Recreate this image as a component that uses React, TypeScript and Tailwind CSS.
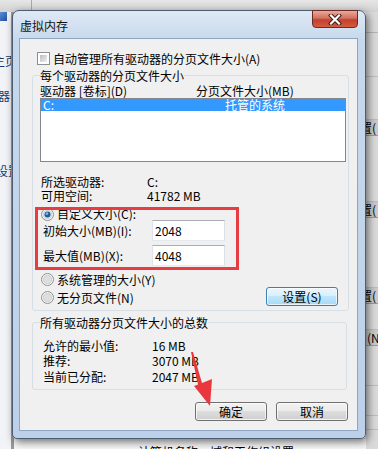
import type { ReactNode } from 'react';

function CheckBox() {
    return (
        <span className="block w-[13px] h-[13px] shrink-0 border border-[#8e8f8f] bg-white p-[2px]">
            <span className="block w-full h-full bg-[linear-gradient(135deg,#b9bdc3,#eeeeef)]" />
        </span>
    );
}

function Radio({ checked = false }: { checked?: boolean }) {
    return (
        <svg width="13" height="13" viewBox="0 0 13 13" className="shrink-0">
            <circle cx="6.5" cy="6.5" r="6" fill="#f6f6f6" stroke="#8e8f8f" />
            <circle cx="6.5" cy="6.5" r="4.2" fill={checked ? '#dfe7f0' : '#dedede'} stroke="#c9c9c9" strokeWidth="0.8" />
            {checked && (
                <>
                    <circle cx="6.5" cy="6.5" r="3" fill="#1d5d98" />
                    <circle cx="5.9" cy="5.7" r="1.4" fill="#78b4e4" />
                </>
            )}
        </svg>
    );
}

function WinButton({ children, hot = false }: { children: ReactNode; hot?: boolean }) {
    return (
        <div
            className={
                hot
                    ? 'w-[72px] h-[19px] rounded-[3px] border border-[#3c7fb1] bg-[linear-gradient(to_bottom,#eaf6fd_0%,#d9f0fc_45%,#bee6fd_50%,#a7d9f5_100%)] shadow-[inset_0_0_0_1px_rgba(255,255,255,0.7)] flex items-center justify-center leading-[15px]'
                    : 'w-[72px] h-[19px] rounded-[3px] border border-[#707070] bg-[linear-gradient(to_bottom,#f2f2f2_0%,#ebebeb_45%,#dddddd_50%,#cfcfcf_100%)] shadow-[inset_0_0_0_1px_rgba(255,255,255,0.7)] flex items-center justify-center leading-[15px]'
            }
        >
            {children}
        </div>
    );
}

function Field({ value }: { value: string }) {
    return (
        <div className="w-[73px] h-[21px] border border-[#abadb3] border-l-[#e2e3ea] border-r-[#dbdfe6] border-b-[#e3e9ef] bg-white pl-[2px] flex items-center leading-[15px]">
            {value}
        </div>
    );
}

function Backdrop() {
    return (
        <>
            {/* window behind, top edge */}
            <div className="absolute left-0 top-0 w-[378px] h-[12px] bg-[linear-gradient(to_bottom,#e6e6e6,#d2d2d2)] flex">
                <div className="w-[32px] h-full border-r border-[#a8a8a8]" />
            </div>
            {/* left sidebar of the window behind */}
            <div className="absolute left-0 top-[12px] w-[14px] h-[437px] bg-[#f1f3f6] border-r-[3px] border-[#9a9a9a] overflow-hidden">
                <div className="w-[7px] h-[9px] bg-[linear-gradient(135deg,#5b8fd6,#1f4f9e)]" />
                <div className="mt-[32px] -ml-[7px] whitespace-nowrap text-[#1e3a6e]">主页</div>
                <div className="mt-[20px] -ml-[2px] whitespace-nowrap text-[#1e3a6e]">器</div>
                <div className="mt-[60px] -ml-[4px] whitespace-nowrap text-[#1e3a6e]">设置</div>
            </div>
            {/* right side of the window behind */}
            <div className="absolute left-[366px] top-[12px] w-[12px] h-[437px] bg-[#dadada] overflow-hidden">
                <div className="h-[21px] border-b border-[#b5b5b5]" />
                <div className="h-[44px] border-b border-[#bdbdbd]" />
                <div className="h-[43px] border-b border-[#bdbdbd]" />
                <div className="h-[16px] bg-[#cacaca] border-b border-[#9c9c9c] whitespace-nowrap -ml-[18px] leading-[15px]">设置(</div>
                <div className="h-[66px] border-b border-[#bdbdbd]" />
                <div className="h-[16px] bg-[#cacaca] border-b border-[#9c9c9c] whitespace-nowrap -ml-[18px] leading-[15px]">设置(</div>
                <div className="h-[70px] border-b border-[#bdbdbd]" />
                <div className="h-[16px] bg-[#cacaca] border-b border-[#9c9c9c] whitespace-nowrap -ml-[18px] leading-[15px]">设置(</div>
                <div className="h-[26px] border-b border-[#bdbdbd]" />
                <div className="h-[16px] bg-[#cacaca] border-b border-[#9c9c9c] whitespace-nowrap pl-[1px] leading-[15px]">(NT</div>
                <div className="h-[40px] border-b border-[#bdbdbd]" />
                <div className="h-[30px] border-b border-[#bdbdbd]" />
                <div className="h-[14px] border-b border-[#bdbdbd]" />
            </div>
            {/* content below the dialog */}
            <div className="absolute left-[14px] top-[439px] w-[352px] h-[10px] bg-[#f7f7f7] overflow-hidden">
                <div className="ml-[124px] mt-[5px] whitespace-nowrap leading-[15px]">计算机名称、域和工作组设置</div>
            </div>
        </>
    );
}

export default function App() {
    return (
        <div className="relative w-[378px] h-[449px] overflow-hidden bg-[#ececec] text-[12px] leading-[15px] text-black font-['Noto_Sans_CJK_SC','Liberation_Sans',sans-serif]">
            <Backdrop />

            {/* Dialog window */}
            <div className="absolute left-[12px] top-[10px] w-[354px] h-[429px] rounded-t-[7px] rounded-b-[5px] border border-[#4d5d72] bg-[linear-gradient(to_bottom,#dfe9f5_0px,#c6d8ec_30px,#bcd1e9_100%)] shadow-[2px_3px_8px_rgba(0,0,0,0.55)] flex flex-col">
                {/* Title bar */}
                <div className="h-[27px] flex justify-between">
                    <div className="self-center pl-[7px] mt-[1px] text-[#111]">虚拟内存</div>
                    <div className="-mt-px mr-[7px] w-[46px] h-[18px] rounded-b-[4px] border border-[#6d2a22] bg-[linear-gradient(to_bottom,#e9a99b_0%,#d2705f_45%,#c2402f_55%,#d45b3c_100%)] flex items-center justify-center">
                        <svg width="14" height="11" viewBox="0 0 14 11">
                            <path d="M3 1.5 L11 9.5 M11 1.5 L3 9.5" stroke="#3a1410" strokeWidth="4" strokeLinecap="square" />
                            <path d="M3 1.5 L11 9.5 M11 1.5 L3 9.5" stroke="#ffffff" strokeWidth="2.2" strokeLinecap="square" />
                        </svg>
                    </div>
                </div>

                {/* Client area */}
                <div className="ml-[6px] w-[339px] h-[393px] border border-[#8fa6c2] bg-[#f0f0f0] flex flex-col">
                    <div className="mt-[12px] ml-[17px] flex items-center gap-[3px]">
                        <CheckBox />
                        <span>自动管理所有驱动器的分页文件大小(A)</span>
                    </div>

                    {/* Per-drive group */}
                    <fieldset className="mt-[2px] ml-[12px] w-[317px] border border-[#d5dfe5] rounded-[3px] pl-[7px] pr-[2px] pb-[4px]">
                        <legend className="leading-[15px]">每个驱动器的分页文件大小</legend>
                        <div className="flex leading-[14px] mt-px">
                            <span className="w-[156px]">驱动器 [卷标](D)</span>
                            <span>分页文件大小(MB)</span>
                        </div>
                        <div className="w-[306px] h-[64px] border border-[#828790] bg-white">
                            <div className="h-[12px] bg-[#3399ff] text-white flex leading-[12px]">
                                <span className="w-[184px] pl-[2px]">C:</span>
                                <span>托管的系统</span>
                            </div>
                        </div>

                        <div className="mt-[13px] pl-[1px] leading-[14px]">
                            <div className="flex">
                                <span className="w-[106px]">所选驱动器:</span>
                                <span>C:</span>
                            </div>
                            <div className="flex">
                                <span className="w-[106px]">可用空间:</span>
                                <span>41782 MB</span>
                            </div>
                        </div>

                        <div className="mt-[5px] flex items-center gap-[3px] h-[12px] pl-px">
                            <Radio checked />
                            <span className="leading-[12px]">自定义大小(C):</span>
                        </div>
                        <div className="flex items-center pl-[3px]">
                            <span className="w-[109px]">初始大小(MB)(I):</span>
                            <Field value="2048" />
                        </div>
                        <div className="mt-[4px] flex items-center pl-[3px]">
                            <span className="w-[109px]">最大值(MB)(X):</span>
                            <Field value="4048" />
                        </div>

                        <div className="mt-[6px] flex justify-between">
                            <div className="flex flex-col gap-[3px] pl-px">
                                <div className="flex items-center gap-[3px]">
                                    <Radio />
                                    <span>系统管理的大小(Y)</span>
                                </div>
                                <div className="flex items-center gap-[3px]">
                                    <Radio />
                                    <span>无分页文件(N)</span>
                                </div>
                            </div>
                            <div className="mt-[15px] mr-[8px]">
                                <WinButton hot>设置(S)</WinButton>
                            </div>
                        </div>
                    </fieldset>

                    {/* Totals group */}
                    <fieldset className="mt-[4px] ml-[12px] w-[315px] border border-[#d5dfe5] rounded-[3px] pl-[7px] pb-[5px]">
                        <legend className="leading-[15px]">所有驱动器分页文件大小的总数</legend>
                        <div className="mt-[8px] pl-[3px]">
                            <div className="flex">
                                <span className="w-[109px]">允许的最小值:</span>
                                <span>16 MB</span>
                            </div>
                            <div className="flex">
                                <span className="w-[109px]">推荐:</span>
                                <span>3070 MB</span>
                            </div>
                            <div className="flex mt-px">
                                <span className="w-[109px]">当前已分配:</span>
                                <span>2047 MB</span>
                            </div>
                        </div>
                    </fieldset>

                    <div className="mt-[12px] pr-[9px] flex justify-end gap-[9px]">
                        <WinButton>确定</WinButton>
                        <WinButton>取消</WinButton>
                    </div>
                </div>
            </div>

            {/* Red annotations */}
            <div className="absolute left-[35px] top-[207px] w-[204px] h-[63px] border-[3px] border-[#e63c42]" />
            <svg className="absolute left-0 top-0 pointer-events-none" width="378" height="449" viewBox="0 0 378 449">
                <path d="M191 352 L193 352 L202 383 L212 379 L210 406 L194 386 L198 384.5 Z" fill="#e8383d" />
            </svg>
        </div>
    );
}
